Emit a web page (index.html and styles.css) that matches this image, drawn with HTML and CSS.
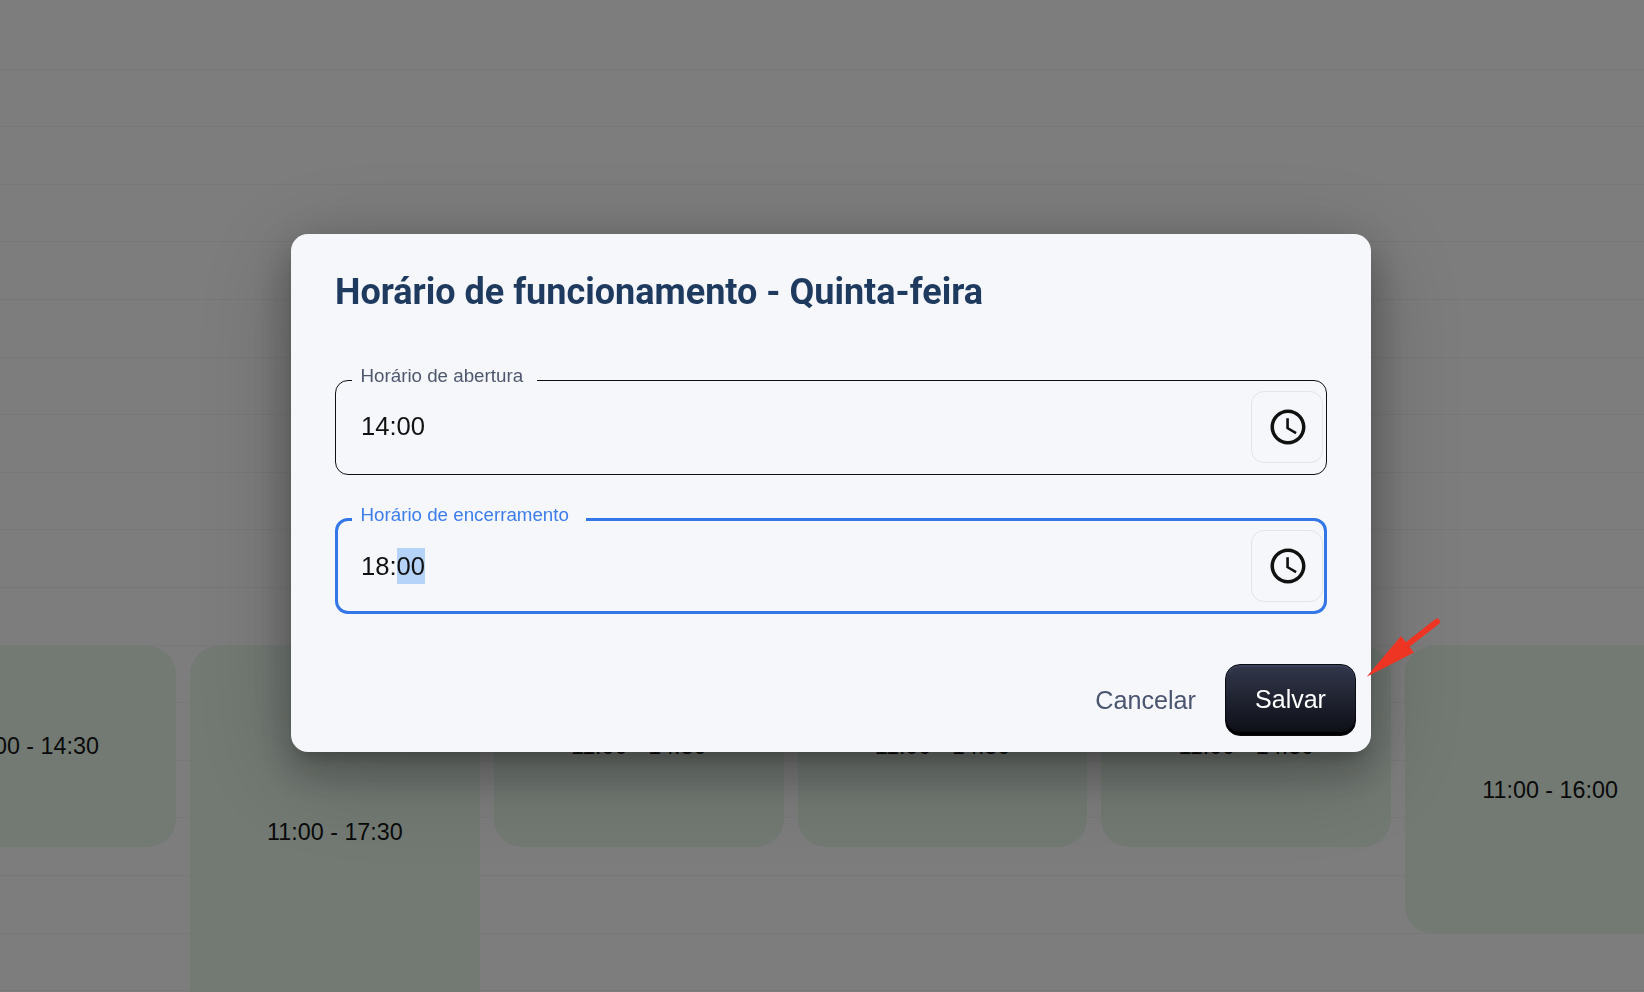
FILE: index.html
```html
<!DOCTYPE html>
<html lang="pt-BR">
<head>
<meta charset="utf-8">
<title>Horário de funcionamento</title>
<link rel="stylesheet" href="styles.css">
</head>
<body>
<main class="board">
  <div class="rows">
    <div class="row"></div><div class="row"></div><div class="row"></div><div class="row"></div>
    <div class="row"></div><div class="row"></div><div class="row"></div><div class="row"></div>
    <div class="row"></div><div class="row"></div><div class="row"></div><div class="row"></div>
    <div class="row"></div><div class="row"></div><div class="row"></div><div class="row"></div>
    <div class="row"></div>
  </div>
  <div class="days">
    <div class="slot slot-short">11:00 - 14:30</div>
    <div class="slot slot-tall">11:00 - 17:30</div>
    <div class="slot slot-short">11:00 - 14:30</div>
    <div class="slot slot-short">11:00 - 14:30</div>
    <div class="slot slot-short">11:00 - 14:30</div>
    <div class="slot slot-mid">11:00 - 16:00</div>
  </div>
</main>

<div class="overlay">
  <section class="modal">
    <h1 class="modal-title">Horário de funcionamento - Quinta-feira</h1>
    <div class="fields">
      <div class="field">
        <span class="field-label">Horário de abertura</span>
        <div class="field-value">14:00</div>
        <button class="icon-btn" type="button" aria-label="Escolher horário">
          <svg class="clock" viewBox="0 0 24 24"><path d="M11.99 2C6.47 2 2 6.48 2 12s4.47 10 9.99 10C17.52 22 22 17.52 22 12S17.52 2 11.99 2M12 20c-4.42 0-8-3.58-8-8s3.58-8 8-8 8 3.58 8 8-3.58 8-8 8m.5-13H11v6l5.25 3.15.75-1.23-4.5-2.67z"/></svg>
        </button>
      </div>
      <div class="field field-focus">
        <span class="field-label">Horário de encerramento</span>
        <div class="field-value">18:<span class="selected">00</span></div>
        <button class="icon-btn" type="button" aria-label="Escolher horário">
          <svg class="clock" viewBox="0 0 24 24"><path d="M11.99 2C6.47 2 2 6.48 2 12s4.47 10 9.99 10C17.52 22 22 17.52 22 12S17.52 2 11.99 2M12 20c-4.42 0-8-3.58-8-8s3.58-8 8-8 8 3.58 8 8-3.58 8-8 8m.5-13H11v6l5.25 3.15.75-1.23-4.5-2.67z"/></svg>
        </button>
      </div>
    </div>
    <div class="actions">
      <button class="btn-text" type="button">Cancelar</button>
      <button class="btn-save" type="button">Salvar</button>
    </div>
  </section>
</div>

<svg class="arrow" viewBox="0 0 1644 992" aria-hidden="true">
  <line class="arrow-shaft" x1="1407" y1="645" x2="1437" y2="621.7"/>
  <polygon class="arrow-head" points="1366.7,676.7 1401,636 1414,652.5"/>
</svg>
</body>
</html>
```
FILE: styles.css
```css
* { box-sizing: border-box; }

html, body {
  margin: 0;
  height: 992px;
  overflow: hidden;
}

body {
  font-family: "Liberation Sans", Arial, sans-serif;
  background: #fafafa;
}

/* Background calendar */
.board {
  display: grid;
  height: 992px;
  overflow: hidden;
}

.rows, .days {
  grid-area: 1 / 1;
}

.rows {
  padding-top: 12px;
}

.row {
  height: 57.6px;
  border-bottom: 1px solid #f0f0f0;
}

.days {
  display: grid;
  grid-template-columns: repeat(6, 289.8px);
  column-gap: 14px;
  align-items: start;
  margin-left: -113.8px;
  padding-top: 646px;
}

.slot {
  display: flex;
  align-items: center;
  justify-content: center;
  background: #e6f4e8;
  border-radius: 28px;
  font-size: 23.3px;
  color: #141414;
}

.slot-short { height: 201px; }
.slot-tall  { height: 373px; }
.slot-mid   { height: 288px; }

/* Dialog */
.overlay {
  position: fixed;
  inset: 0;
  display: flex;
  align-items: center;
  justify-content: center;
  padding: 0 0 6px 18px;
  background: rgba(0, 0, 0, 0.5);
}

.modal {
  display: flex;
  flex-direction: column;
  width: 1080px;
  height: 518px;
  padding: 37px 15px 16px 44px;
  border-radius: 17px;
  background: #f5f7fb;
  box-shadow:
    0 11px 15px -7px rgba(0, 0, 0, 0.2),
    0 24px 38px 3px rgba(0, 0, 0, 0.14),
    0 9px 46px 8px rgba(0, 0, 0, 0.12),
    0 20px 100px 10px rgba(0, 0, 0, 0.16);
}

.modal-title {
  margin: 0;
  height: 42px;
  font-family: Roboto, sans-serif;
  font-size: 36px;
  line-height: 42px;
  font-weight: 700;
  color: #1f3a5f;
}

.fields {
  display: flex;
  flex-direction: column;
  gap: 43px;
  margin-top: 67px;
  margin-right: 29px;
}

.field {
  position: relative;
  display: flex;
  align-items: center;
  justify-content: space-between;
  height: 95px;
  padding: 0 3px 0 25px;
  border: 1px solid #111;
  border-radius: 13px;
}

.field-label {
  position: absolute;
  left: 15.5px;
  top: -17px;
  padding: 0 14px 0 9px;
  font-size: 18.75px;
  line-height: 24px;
  color: #50586e;
  background: linear-gradient(transparent 0 50%, #f5f7fb 50%);
}

.field-value {
  margin-bottom: 3px;
  font-size: 25.6px;
  line-height: 36px;
  color: #111;
}

.selected {
  display: inline-block;
  background: #b5d3f9;
}

.icon-btn {
  display: flex;
  align-items: center;
  justify-content: center;
  width: 72px;
  height: 72px;
  margin-bottom: 1px;
  padding: 0 0 0 1px;
  border: 1px solid #e2e4ea;
  border-radius: 13px;
  background: transparent;
}

.clock {
  width: 42px;
  height: 42px;
  fill: #111;
}

.field-focus {
  height: 96px;
  padding: 0 1px 0 23px;
  border: 3px solid #3276e8;
}

.field-focus .field-value {
  margin-bottom: 1px;
}

.field-focus .field-label {
  left: 13.5px;
  top: -18px;
  padding-right: 17px;
  color: #3e7ee8;
}

.actions {
  display: flex;
  align-items: center;
  justify-content: flex-end;
  gap: 29px;
  margin-top: 50px;
}

.btn-text {
  padding: 0;
  border: 0;
  background: none;
  font: inherit;
  font-size: 25.2px;
  color: #4b5570;
}

.btn-save {
  width: 131px;
  height: 72px;
  padding: 0 0 2px;
  border: 1px solid #0b0c12;
  border-radius: 15px;
  background: linear-gradient(#32374b, #0c0e15);
  box-shadow: inset 0 -3px 0 #000, inset 0 2px 0 #3a4057;
  font: inherit;
  font-size: 25px;
  color: #fff;
}

/* Annotation arrow */
.arrow {
  position: absolute;
  left: 0;
  top: 0;
  width: 1644px;
  height: 992px;
  pointer-events: none;
}

.arrow-shaft {
  stroke: #ee3524;
  stroke-width: 6;
  stroke-linecap: round;
}

.arrow-head {
  fill: #ee3524;
}
```
